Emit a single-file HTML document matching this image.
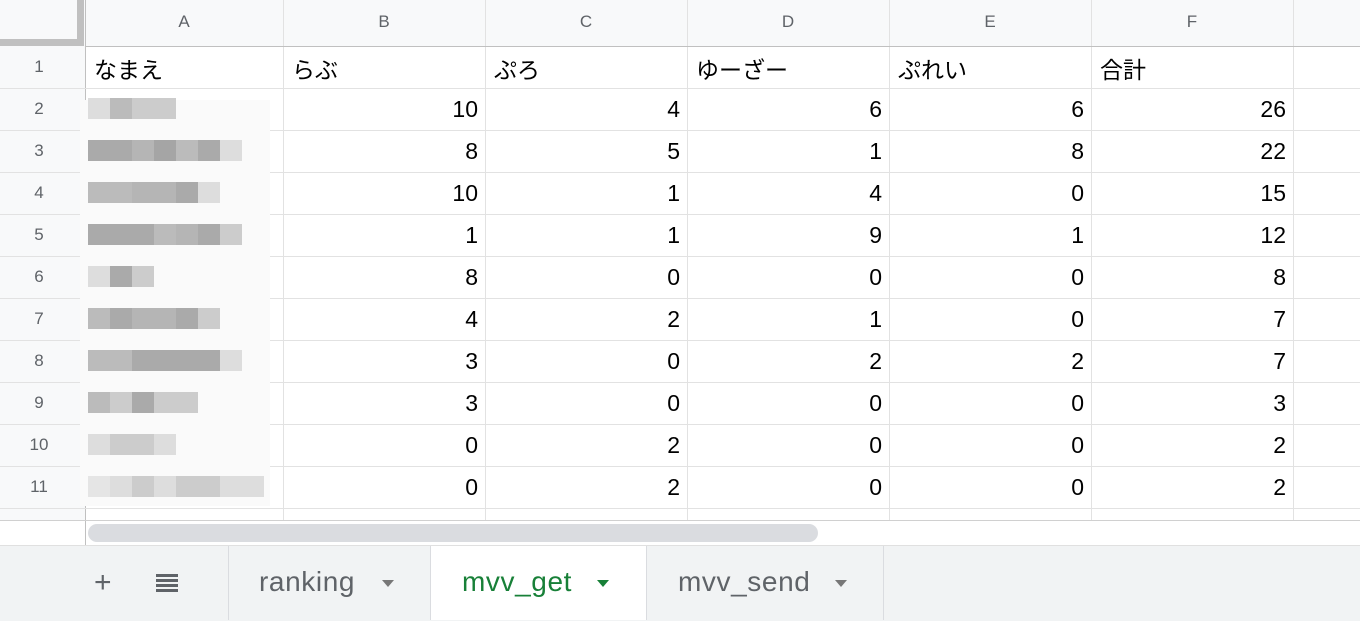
<!DOCTYPE html>
<html><head><meta charset="utf-8"><style>
body{margin:0;width:1360px;height:620px;overflow:hidden;background:#fff;font-family:"Liberation Sans","Noto Sans CJK JP",sans-serif;position:relative}
.a{position:absolute}
.hd{background:#f8f9fa;color:#5f6368;font-size:17px;text-align:center}
.vl{position:absolute;width:1px;background:#e2e2e2}
.hl{position:absolute;height:1px;background:#e2e2e2}
.n{position:absolute;font-size:23px;color:#000;text-align:right}
.b{position:absolute;height:21px}
.tab{position:absolute;top:566px;font-size:28px;letter-spacing:0.6px}
</style></head><body>
<div class="a hd" style="left:0;top:0;width:1360px;height:46px"></div>
<div class="a hd" style="left:0;top:46px;width:85px;height:474px"></div>
<div class="a hd" style="left:85px;top:12px;width:198px;background:none">A</div>
<div class="a hd" style="left:283px;top:12px;width:202px;background:none">B</div>
<div class="a hd" style="left:485px;top:12px;width:202px;background:none">C</div>
<div class="a hd" style="left:687px;top:12px;width:202px;background:none">D</div>
<div class="a hd" style="left:889px;top:12px;width:202px;background:none">E</div>
<div class="a hd" style="left:1091px;top:12px;width:202px;background:none">F</div>
<div class="vl" style="left:85px;top:0;height:545px;background:#c0c0c0"></div>
<div class="vl" style="left:283px;top:0;height:520px"></div>
<div class="vl" style="left:485px;top:0;height:520px"></div>
<div class="vl" style="left:687px;top:0;height:520px"></div>
<div class="vl" style="left:889px;top:0;height:520px"></div>
<div class="vl" style="left:1091px;top:0;height:520px"></div>
<div class="vl" style="left:1293px;top:0;height:520px"></div>
<div class="a" style="left:77px;top:0;width:7px;height:46px;background:#c0c0c0"></div>
<div class="a" style="left:0;top:39px;width:84px;height:7px;background:#c0c0c0"></div>
<div class="hl" style="left:85px;top:46px;width:1275px;background:#c0c0c0"></div>
<div id="rows"></div>
<div class="hl" style="left:0;top:520px;width:1360px;background:#d0d0d0"></div>
<div class="a" style="left:88px;top:524px;width:730px;height:18px;border-radius:9px;background:#dadce0"></div>
<div class="a" style="left:0;top:545px;width:1360px;height:75px;background:#f1f3f4;border-top:1px solid #e0e0e0"></div>
<div class="a" style="left:94px;top:566px;font-size:30px;color:#5f6368">+</div>
<div class="a" style="left:156px;top:574px;width:22px;height:3px;background:#5f6368;box-shadow:0 5px 0 #5f6368,0 10px 0 #5f6368,0 15px 0 #5f6368"></div>
<div class="a" style="left:228px;top:546px;width:1px;height:74px;background:#dadce0"></div>
<div class="tab" style="left:259px;color:#5f6368">ranking</div>
<div class="a" style="left:382px;top:580px;border:6px solid transparent;border-top:7px solid #777"></div>
<div class="a" style="left:430px;top:546px;width:215px;height:74px;background:#fff;border-left:1px solid #dadce0;border-right:1px solid #dadce0"></div>
<div class="tab" style="left:462px;color:#188038">mvv_get</div>
<div class="a" style="left:597px;top:580px;border:6px solid transparent;border-top:7px solid #188038"></div>
<div class="tab" style="left:678px;color:#5f6368">mvv_send</div>
<div class="a" style="left:835px;top:580px;border:6px solid transparent;border-top:7px solid #777"></div>
<div class="a" style="left:883px;top:546px;width:1px;height:74px;background:#dadce0"></div>
<script>
var d=[["なまえ","らぶ","ぷろ","ゆーざー","ぷれい","合計"],[10,4,6,6,26],[8,5,1,8,22],[10,1,4,0,15],[1,1,9,1,12],[8,0,0,0,8],[4,2,1,0,7],[3,0,2,2,7],[3,0,0,0,3],[0,2,0,0,2],[0,2,0,0,2]];
var xs=[85,283,485,687,889,1091,1293],h="";
for(var r=0;r<11;r++){var t=46+r*42;
h+='<div class="a hd" style="left:0;top:'+(t+11)+'px;width:78px;background:none">'+(r+1)+'</div>';
h+='<div class="hl" style="left:0;top:'+(t+42)+'px;width:1360px;'+'"></div>';
if(r==0){for(var c=0;c<6;c++)h+='<div class="a" style="left:'+(xs[c]+9)+'px;top:'+(t+5)+'px;font-size:23px">'+d[0][c]+'</div>';}
else{for(var c=0;c<5;c++)h+='<div class="n" style="left:'+xs[c+1]+'px;width:195px;top:'+(t+8)+'px">'+d[r][c]+'</div>';}
}
h+='<div class="a" style="left:80px;top:100px;width:190px;height:406px;background:#fafafa"></div>';
var g=[[2,["#ddd","#bbb","#ccc","#ccc"],4],[3,["#aaa","#aaa","#b5b5b5","#a5a5a5","#bbb","#aaa","#ddd"],7],[4,["#bbb","#bbb","#b5b5b5","#b5b5b5","#aaa","#ddd"],6],[5,["#aaa","#aaa","#aaa","#bbb","#b5b5b5","#aaa","#ccc"],7],[6,["#ddd","#aaa","#ccc"],3],[7,["#bbb","#aaa","#b5b5b5","#b5b5b5","#aaa","#ccc"],6],[8,["#bbb","#bbb","#aaa","#aaa","#aaa","#aaa","#ddd"],7],[9,["#bbb","#ccc","#aaa","#ccc","#ccc"],5],[10,["#ddd","#ccc","#ccc","#ddd"],4],[11,["#e5e5e5","#ddd","#ccc","#ddd","#ccc","#ccc","#ddd","#ddd"],8]];
g.forEach(function(x){var t=46+(x[0]-1)*42+10;x[1].forEach(function(col,i){h+='<div class="b" style="left:'+(88+i*22)+'px;top:'+t+'px;width:22px;background:'+col+'"></div>';});});
document.getElementById('rows').innerHTML=h;
</script>
</body></html>
